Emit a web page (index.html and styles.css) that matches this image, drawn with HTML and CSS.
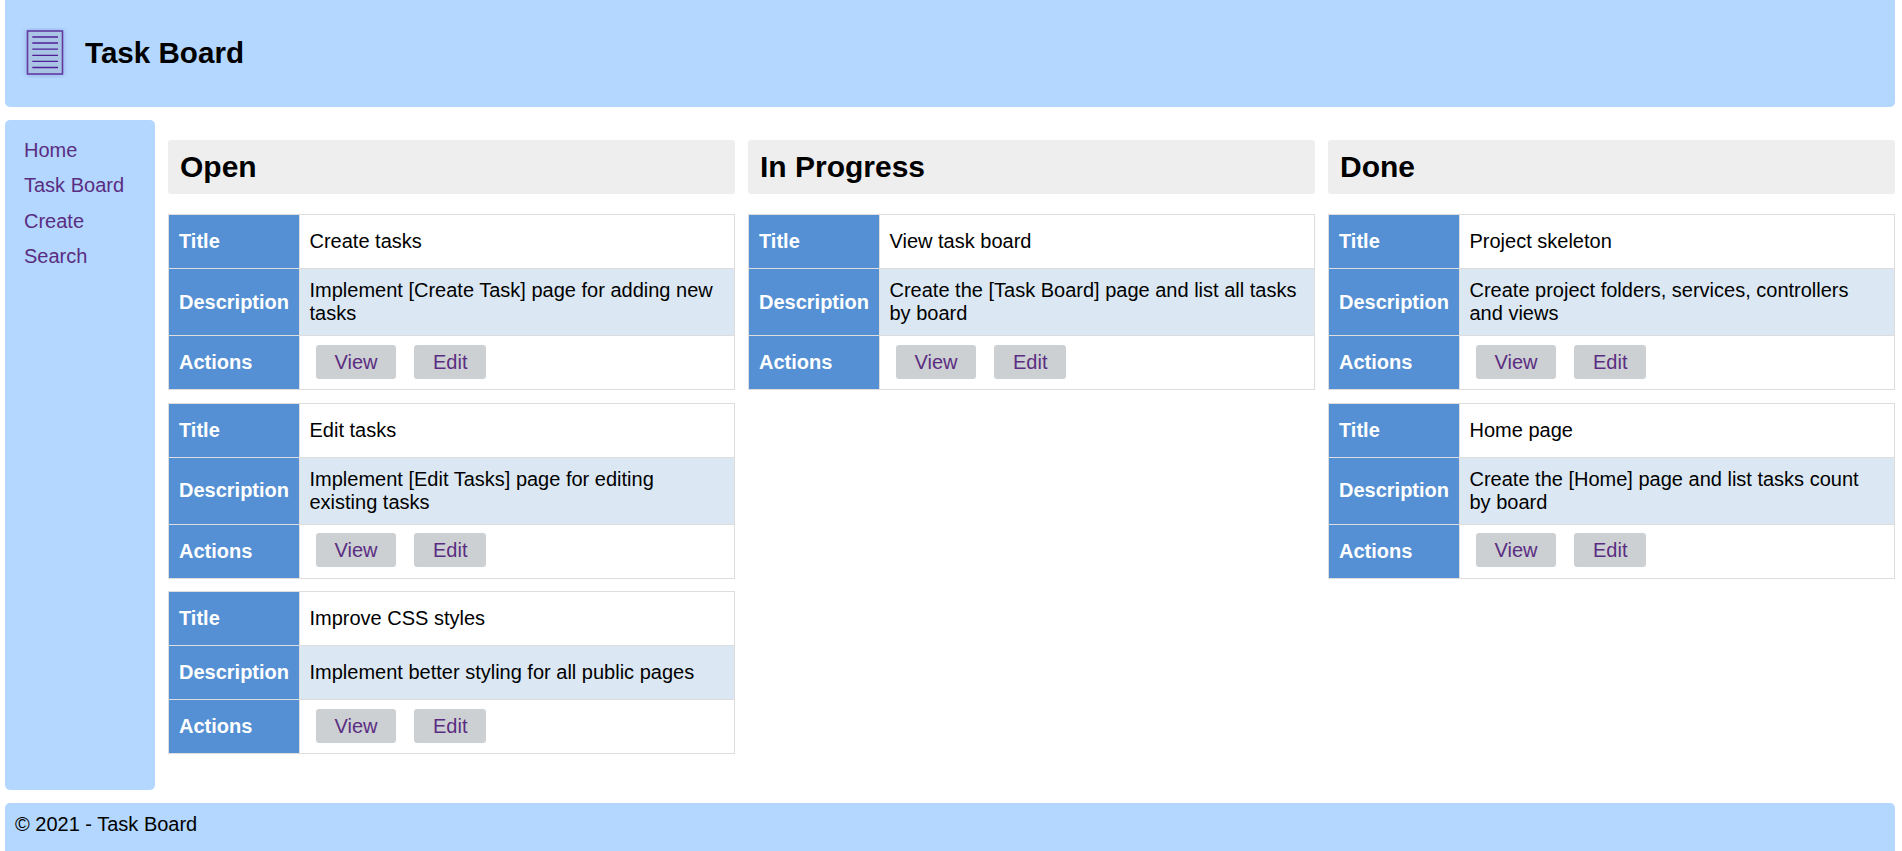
FILE: index.html
```html
<!DOCTYPE html>
<html lang="en">
<head>
<meta charset="utf-8">
<title>Task Board</title>
<link rel="stylesheet" href="styles.css">
</head>
<body>
<header class="site-header">
  <svg class="logo" width="50" height="50" viewBox="0 0 50 50" aria-hidden="true">
    <rect class="logo-page" x="6.5" y="3" width="35" height="43" fill="#a9c4e4" stroke="#5f3ba4" stroke-width="1.6"/>
    <path d="M11.3 9H37M11.3 15H37M11.3 21.2H37M11.3 27.3H37M11.3 33.4H37M11.3 39.5H37" stroke="#4f1f98" stroke-width="1.3" fill="none"/>
  </svg>
  <h1 class="site-title">Task Board</h1>
</header>
<div class="middle">
  <nav class="side">
    <a href="#">Home</a>
    <a href="#">Task Board</a>
    <a href="#">Create</a>
    <a href="#">Search</a>
  </nav>
  <main class="board">
    <section class="col">
      <h2 class="col-title">Open</h2>
      <table class="task"><tr class="r-t"><th>Title</th><td>Create tasks</td></tr><tr class="r-d"><th>Description</th><td>Implement [Create Task] page for adding new tasks</td></tr><tr class="r-a"><th>Actions</th><td><a class="btn" href="#">View</a><a class="btn" href="#">Edit</a></td></tr></table>
      <table class="task"><tr class="r-t"><th>Title</th><td>Edit tasks</td></tr><tr class="r-d"><th>Description</th><td>Implement [Edit Tasks] page for editing existing tasks</td></tr><tr class="r-a"><th>Actions</th><td><a class="btn" href="#">View</a><a class="btn" href="#">Edit</a></td></tr></table>
      <table class="task"><tr class="r-t"><th>Title</th><td>Improve CSS styles</td></tr><tr class="r-d"><th>Description</th><td>Implement better styling for all public pages</td></tr><tr class="r-a"><th>Actions</th><td><a class="btn" href="#">View</a><a class="btn" href="#">Edit</a></td></tr></table>
    </section>
    <section class="col">
      <h2 class="col-title">In Progress</h2>
      <table class="task"><tr class="r-t"><th>Title</th><td>View task board</td></tr><tr class="r-d"><th>Description</th><td>Create the [Task Board] page and list all tasks by board</td></tr><tr class="r-a"><th>Actions</th><td><a class="btn" href="#">View</a><a class="btn" href="#">Edit</a></td></tr></table>
    </section>
    <section class="col">
      <h2 class="col-title">Done</h2>
      <table class="task"><tr class="r-t"><th>Title</th><td>Project skeleton</td></tr><tr class="r-d"><th>Description</th><td>Create project folders, services, controllers and views</td></tr><tr class="r-a"><th>Actions</th><td><a class="btn" href="#">View</a><a class="btn" href="#">Edit</a></td></tr></table>
      <table class="task"><tr class="r-t"><th>Title</th><td>Home page</td></tr><tr class="r-d"><th>Description</th><td>Create the [Home] page and list tasks count by board</td></tr><tr class="r-a"><th>Actions</th><td><a class="btn" href="#">View</a><a class="btn" href="#">Edit</a></td></tr></table>
    </section>
  </main>
</div>
<footer class="site-footer">© 2021 - Task Board</footer>
</body>
</html>
```
FILE: styles.css
```css
* { box-sizing: border-box; }
html, body { height: 100%; }
body {
  margin: 0;
  padding: 0 7px 0 5px;
  height: 851px;
  overflow: hidden;
  display: flex;
  flex-direction: column;
  gap: 13px;
  background: #fff;
  color: #000;
  font-family: "Liberation Sans", Arial, sans-serif;
  font-size: 20px;
  line-height: 23px;
}
.site-header {
  height: 107px;
  flex: none;
  background: #b3d7ff;
  border-radius: 0 0 5px 5px;
  display: flex;
  align-items: center;
  padding: 0 0 2px 16px;
  gap: 14px;
}
.logo { flex: none; }
.logo-page { filter: drop-shadow(0 0 3px rgba(90, 60, 160, 0.3)); }
.site-title { margin: 0; font-size: 29.6px; line-height: 34px; font-weight: 700; }
.middle { flex: 1; min-height: 0; display: flex; gap: 13px; }
.side {
  width: 150px;
  flex: none;
  background: #b3d7ff;
  border-radius: 5px;
  padding: 19px 19px;
  display: flex;
  flex-direction: column;
  gap: 12.4px;
}
.side a { color: #5a2d82; text-decoration: none; line-height: 23px; }
.board {
  flex: 1;
  min-width: 0;
  padding-top: 20px;
  display: grid;
  grid-template-columns: repeat(3, 1fr);
  column-gap: 13px;
  align-content: start;
  align-items: start;
}
.col { min-width: 0; }
.col-title {
  margin: 0 0 20px;
  height: 54px;
  padding-left: 12px;
  background: #eee;
  border-radius: 3px;
  font-size: 30px;
  line-height: 54px;
  font-weight: 700;
}
.task {
  width: 100%;
  table-layout: fixed;
  border-collapse: collapse;
  margin-bottom: 12.6px;
  border: 1px solid #ddd;
}
.task th {
  width: 131px;
  padding: 0 0 0 10px;
  background: #5490d3;
  color: #fff;
  text-align: left;
  font-weight: 700;
  border-bottom: 1px solid #ddd;
  border-right: 1px solid #ddd;
}
.task td { padding: 0 10px 0 9.5px; border-bottom: 1px solid #ddd; }
.r-t th, .r-t td { height: 54px; }
.r-a th { height: 54px; }
.r-a td { height: 54px; padding-bottom: 2px; }
.r-d th, .r-d td { height: 54px; }
.r-d td { padding: 10px 10px 10px 9.5px; background: #dbe8f3; }
.btn {
  display: inline-block;
  height: 34px;
  line-height: 34px;
  padding: 0 18.5px;
  margin: 0 12px 0 6.5px;
  background: #cdd0d2;
  border-radius: 3px;
  color: #5a2d82;
  text-decoration: none;
  vertical-align: middle;
}
.btn + .btn { margin-left: 6px; padding: 0 19px; }
.site-footer {
  flex: none;
  height: 48px;
  background: #b3d7ff;
  border-radius: 5px 5px 0 0;
  padding: 10px 10px;
}
```
